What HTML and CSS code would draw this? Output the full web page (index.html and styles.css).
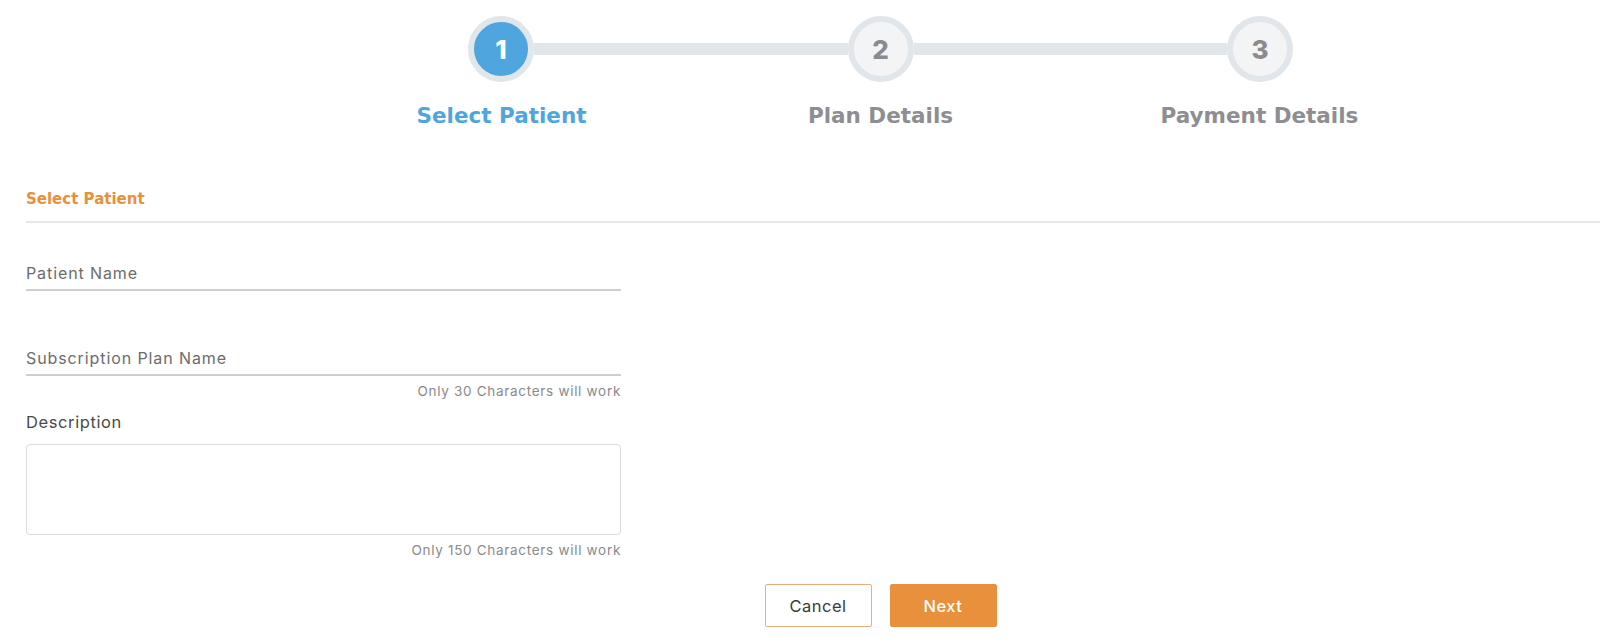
FILE: index.html
```html
<!DOCTYPE html>
<html lang="en">
<head>
<meta charset="utf-8">
<title>Select Patient</title>
<link rel="stylesheet" href="styles.css">
</head>
<body>
<div class="center-col">
  <div class="track">
    <div class="node active">1</div>
    <div class="line"></div>
    <div class="node">2</div>
    <div class="line"></div>
    <div class="node">3</div>
  </div>
  <div class="labels">
    <div class="label active">Select Patient</div>
    <div class="label">Plan Details</div>
    <div class="label">Payment Details</div>
  </div>
</div>

<div class="section-head">Select Patient</div>

<form class="form">
  <input class="field first" type="text" placeholder="Patient Name">
  <input class="field second" type="text" placeholder="Subscription Plan Name">
  <div class="hint">Only 30 Characters will work</div>
  <label class="desc-label">Description</label>
  <textarea class="desc"></textarea>
  <div class="hint">Only 150 Characters will work</div>
</form>

<div class="center-col">
  <div class="actions">
    <button class="btn cancel" type="button">Cancel</button>
    <button class="btn next" type="button">Next</button>
  </div>
</div>
</body>
</html>
```

FILE: styles.css
```css
* { box-sizing: border-box; }
html, body { margin: 0; padding: 0; background: #fff; }
body {
  font-family: "Inter", "Open Sans", "Liberation Sans", sans-serif;
  color: #333;
  width: 1600px;
  overflow: hidden;
}

.center-col {
  width: 1137px;
  margin-left: 312px;
}

.track {
  display: flex;
  align-items: center;
  padding: 0 156px;
  margin-top: 16px;
}
.node {
  width: 66px;
  height: 66px;
  flex: none;
  border-radius: 50%;
  border: 6px solid #e1e6ea;
  background: #f3f4f6;
  color: #8b8b8f;
  font-weight: 800;
  font-size: 26px;
  display: flex;
  align-items: center;
  justify-content: center;
}
.node.active {
  background: #4fa5dd;
  color: #fff;
}
.line {
  flex: 1;
  height: 12px;
  background: #e1e6ea;
}

.labels {
  display: grid;
  grid-template-columns: repeat(3, 1fr);
  margin-top: 22px;
}
.label {
  text-align: center;
  font-family: "DejaVu Sans", "Inter", sans-serif;
  font-size: 21.5px;
  line-height: 24px;
  font-weight: 700;
  color: #8e8e92;
}
.label.active { color: #4fa5dd; }

.section-head {
  margin-top: 61px;
  margin-left: 26px;
  padding-bottom: 12px;
  border-bottom: 2px solid #e6e6e6;
  font-family: "DejaVu Sans", "Inter", sans-serif;
  font-size: 15px;
  line-height: 20px;
  font-weight: 700;
  color: #e8903c;
}

.form {
  width: 595px;
  margin-left: 26px;
  display: flex;
  flex-direction: column;
}
.field {
  border: 0;
  border-bottom: 2px solid #cfcfcf;
  padding: 0 0 6px 0;
  font-family: inherit;
  font-size: 16px;
  letter-spacing: 0.9px;
  line-height: 20px;
  height: 28px;
  outline: none;
  color: #333;
  background: transparent;
}
.field::placeholder { color: #6c6c6c; }
.field.first { margin-top: 40px; }
.field.second { margin-top: 57px; }

.hint {
  text-align: right;
  font-size: 13.5px;
  letter-spacing: 0.7px;
  line-height: 16px;
  color: #8a8a8a;
  margin-top: 7px;
}
.desc-label {
  margin-top: 13px;
  font-size: 16.5px;
  letter-spacing: 0.6px;
  line-height: 20px;
  color: #4a4a4a;
}
.desc {
  margin-top: 12px;
  height: 91px;
  border: 1px solid #dcdcdc;
  border-radius: 4px;
  resize: none;
  font-family: inherit;
  outline: none;
}

.actions {
  display: flex;
  justify-content: center;
  gap: 18px;
  margin-top: 26px;
}
.btn {
  width: 107px;
  height: 43px;
  border-radius: 2px;
  font-family: inherit;
  font-size: 16.5px;
  letter-spacing: 0.5px;
  cursor: pointer;
}
.btn.cancel {
  background: #fff;
  border: 1px solid #f0aa7c;
  color: #3a3a3a;
}
.btn.next {
  background: #e8903c;
  border: 1px solid #e8903c;
  color: #fff;
  font-weight: 500;
}
```
